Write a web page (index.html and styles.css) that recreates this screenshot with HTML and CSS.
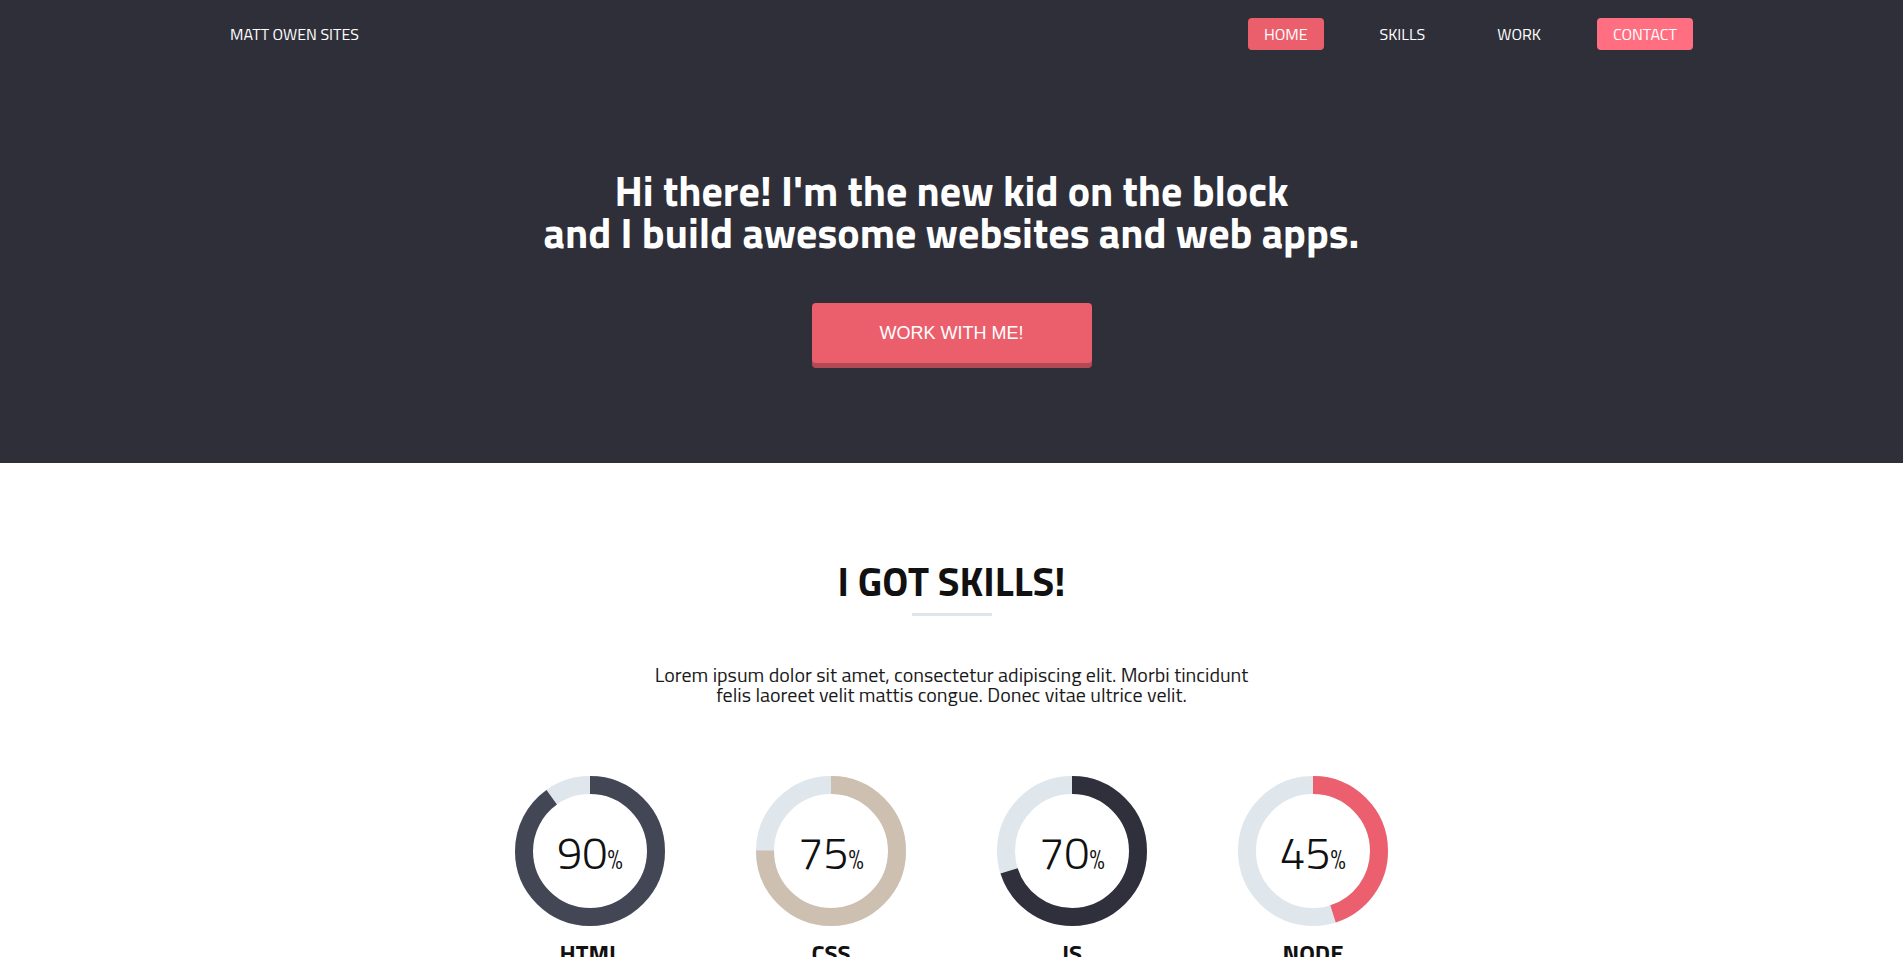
FILE: index.html
```html
<!DOCTYPE html>
<html lang="en">
<head>
<meta charset="utf-8">
<title>Matt Owen Sites</title>
<link rel="stylesheet" href="styles.css">
</head>
<body>
<header class="hero">
  <nav class="nav">
    <a class="brand" href="#">MATT OWEN SITES</a>
    <ul class="menu">
      <li><a class="menu-link is-active" href="#">HOME</a></li>
      <li><a class="menu-link" href="#">SKILLS</a></li>
      <li><a class="menu-link" href="#">WORK</a></li>
      <li><a class="menu-link is-contact" href="#">CONTACT</a></li>
    </ul>
  </nav>
  <div class="hero-body">
    <h1 class="hero-title">Hi there! I'm the new kid on the block<br>and I build awesome websites and web apps.</h1>
    <a class="cta" href="#">WORK WITH ME!</a>
  </div>
</header>
<section class="skills">
  <h2 class="skills-title">I GOT SKILLS!</h2>
  <div class="skills-rule"></div>
  <p class="skills-text">Lorem ipsum dolor sit amet, consectetur adipiscing elit. Morbi tincidunt<br>felis laoreet velit mattis congue. Donec vitae ultrice velit.</p>
  <div class="charts">
    <div class="chart">
      <div class="ring">
        <svg width="150" height="150" viewBox="0 0 150 150"><circle class="track" cx="75" cy="75" r="66"/><circle class="bar bar-html" cx="75" cy="75" r="66" stroke-dasharray="373.22 414.69" transform="rotate(-90 75 75)"/></svg>
        <div class="value">90<span class="pct">%</span></div>
      </div>
      <div class="label">HTML</div>
    </div>
    <div class="chart">
      <div class="ring">
        <svg width="150" height="150" viewBox="0 0 150 150"><circle class="track" cx="75" cy="75" r="66"/><circle class="bar bar-css" cx="75" cy="75" r="66" stroke-dasharray="311.02 414.69" transform="rotate(-90 75 75)"/></svg>
        <div class="value">75<span class="pct">%</span></div>
      </div>
      <div class="label">CSS</div>
    </div>
    <div class="chart">
      <div class="ring">
        <svg width="150" height="150" viewBox="0 0 150 150"><circle class="track" cx="75" cy="75" r="66"/><circle class="bar bar-js" cx="75" cy="75" r="66" stroke-dasharray="290.28 414.69" transform="rotate(-90 75 75)"/></svg>
        <div class="value">70<span class="pct">%</span></div>
      </div>
      <div class="label">JS</div>
    </div>
    <div class="chart">
      <div class="ring">
        <svg width="150" height="150" viewBox="0 0 150 150"><circle class="track" cx="75" cy="75" r="66"/><circle class="bar bar-node" cx="75" cy="75" r="66" stroke-dasharray="186.61 414.69" transform="rotate(-90 75 75)"/></svg>
        <div class="value">45<span class="pct">%</span></div>
      </div>
      <div class="label">NODE</div>
    </div>
  </div>
</section>
</body>
</html>
```
FILE: styles.css
```css
body {
  margin: 0;
  font-family: "Titillium Web", Roboto, sans-serif;
  color: #111;
  background: #fff;
}
.hero {
  background: #2f2f3a;
  height: 463px;
  box-sizing: border-box;
  padding-top: 18px;
}
.nav {
  display: flex;
  justify-content: space-between;
  align-items: center;
  margin: 0 210px 0 230px;
}
.brand {
  color: #fff;
  font-size: 16px;
  line-height: 32px;
  text-decoration: none;
}
.menu {
  display: flex;
  gap: 40px;
  list-style: none;
  margin: 0;
  padding: 0;
}
.menu-link {
  display: block;
  line-height: 32px;
  padding: 0 16px;
  border-radius: 4px;
  color: #fff;
  font-size: 16px;
  text-decoration: none;
}
.menu-link.is-active { background: #eb5f6c; }
.menu-link.is-contact { background: #ff6f81; }
.hero-body {
  text-align: center;
}
.hero-title {
  margin: 119px 0 0;
  font-size: 42px;
  line-height: 42px;
  font-weight: 700;
  color: #fff;
}
.cta {
  display: inline-block;
  margin-top: 50px;
  width: 280px;
  height: 60px;
  line-height: 60px;
  background: #eb5f6d;
  border-radius: 4px;
  box-shadow: 0 5px 0 #b24a55;
  color: #fff;
  font-family: "Liberation Sans", Arial, sans-serif;
  font-size: 18px;
  text-decoration: none;
}
.skills {
  text-align: center;
  padding-top: 99px;
}
.skills-title {
  margin: 0;
  font-size: 40px;
  line-height: 40px;
  font-weight: 700;
  color: #111;
}
.skills-rule {
  width: 80px;
  height: 3px;
  margin: 11px auto 0;
  background: #dfe5ea;
}
.skills-text {
  margin: 49px 0 0;
  font-size: 20px;
  line-height: 20px;
  color: #1a1a1a;
}
.charts {
  display: flex;
  justify-content: center;
  gap: 91px;
  margin-top: 71px;
}
.chart {
  width: 150px;
}
.ring {
  position: relative;
  width: 150px;
  height: 150px;
}
.ring svg { display: block; }
.track {
  fill: none;
  stroke: #dfe7ec;
  stroke-width: 18;
}
.bar {
  fill: none;
  stroke-width: 18;
}
.bar-html { stroke: #424655; }
.bar-css { stroke: #cdc0b1; }
.bar-js { stroke: #30303c; }
.bar-node { stroke: #ec5f6e; }
.value {
  position: absolute;
  left: 0;
  right: 0;
  top: 54px;
  text-align: center;
  font-size: 45px;
  line-height: 45px;
  font-weight: 300;
  color: #111;
}
.pct {
  font-size: 28px;
}
.label {
  margin-top: 15px;
  font-size: 24px;
  line-height: 24px;
  font-weight: 700;
  color: #111;
}
```
